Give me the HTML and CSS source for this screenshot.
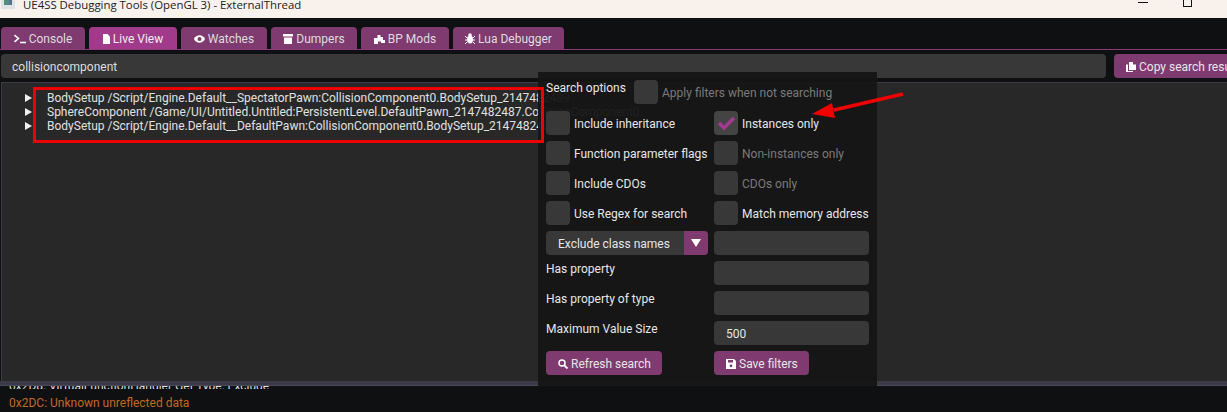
FILE: index.html
```html
<!DOCTYPE html>
<html lang="en">
<head>
<meta charset="utf-8">
<title>UE4SS Debugging Tools</title>
<link rel="stylesheet" href="styles.css">
</head>
<body>
<header class="titlebar">
  <svg class="app-icon" width="14" height="10" viewBox="0 0 14 10"><rect x="0" y="0" width="14" height="10" fill="#dfe3e6"/><rect x="3" y="0" width="5" height="6" fill="#4f8f7d"/><rect x="8" y="0" width="3" height="6" fill="#5a6f96"/></svg>
  <span class="title-text">UE4SS Debugging Tools (OpenGL 3) - ExternalThread</span>
  <span class="win-min"></span>
  <span class="win-max"></span>
</header>
<main class="app">
  <nav class="tabs">
    <div class="tab tab-w1"><svg class="ico" width="12" height="10" viewBox="0 0 12 10"><path d="M0.500 1l4 3.500-4 3.500" fill="none" stroke="#fff" stroke-width="1.600"/><path d="M6 8.500h6" stroke="#fff" stroke-width="1.600"/></svg>Console</div>
    <div class="tab tab-active tab-w2"><svg class="ico" width="7" height="10" viewBox="0 0 7 10"><path d="M0 0h4.500L7 2.500V10H0z" fill="#fff"/></svg>Live View</div>
    <div class="tab tab-w3"><svg class="ico" width="11" height="8" viewBox="0 0 11 8"><path d="M0 4c2-5 9-5 11 0-2 5-9 5-11 0z" fill="#fff"/><circle cx="5.500" cy="4" r="2" fill="#7f3a6f"/></svg>Watches</div>
    <div class="tab tab-w4"><svg class="ico" width="10" height="10" viewBox="0 0 10 10"><path d="M0 0h10v2.500H0zM1 3.500h8V10H1z" fill="#fff"/></svg>Dumpers</div>
    <div class="tab tab-w5"><svg class="ico" width="11" height="10" viewBox="0 0 11 10"><path d="M3.500 1h3v2H9v3h2v3H7V7.500H4V10H0V4h3.500z" fill="#fff"/></svg>BP Mods</div>
    <div class="tab tab-w6"><svg class="ico" width="10" height="11" viewBox="0 0 10 11"><ellipse cx="5" cy="6.500" rx="3" ry="4" fill="#fff"/><circle cx="5" cy="2" r="1.800" fill="#fff"/><path d="M0 3l2 2M10 3L8 5M0 7h2M10 7H8M0 11l2-2M10 11L8 9" stroke="#fff"/></svg>Lua Debugger</div>
  </nav>
  <section class="search-row">
    <div class="search-input">collisioncomponent</div>
    <div class="btn copy-btn"><svg class="ico" width="10" height="10" viewBox="0 0 10 10"><path d="M3 0h4v2.500h3V8H3zM0 2.500h2V9h5v1H0z" fill="#fff"/></svg>Copy search results</div>
  </section>
  <section class="tree">
    <div class="tree-row"><span class="arrow"></span>BodySetup /Script/Engine.Default__SpectatorPawn:CollisionComponent0.BodySetup_2147482489</div>
    <div class="tree-row"><span class="arrow"></span>SphereComponent /Game/UI/Untitled.Untitled:PersistentLevel.DefaultPawn_2147482487.CollisionComponent0</div>
    <div class="tree-row"><span class="arrow"></span>BodySetup /Script/Engine.Default__DefaultPawn:CollisionComponent0.BodySetup_2147482488</div>
  </section>
  <div class="divider"></div>
  <footer class="log">
    <div class="log-clipped">0x2D8: VirtualFunctionHandler Get Type: Exclude</div>
    <div class="log-line">0x2DC: Unknown unreflected data</div>
  </footer>
</main>

<aside class="popup">
  <div class="opt-top">
    <span class="opt-heading">Search options</span>
    <span class="check"></span>
    <span class="muted top-text">Apply filters when not searching</span>
  </div>
  <div class="opt-grid">
    <label class="opt"><span class="check"></span>Include inheritance</label>
    <label class="opt"><span class="check check-on"><svg width="24" height="24" viewBox="0 0 24 24"><path d="M5 12l5 5 10-10" fill="none" stroke="#a13a90" stroke-width="3.500"/></svg></span>Instances only</label>
    <label class="opt"><span class="check"></span>Function parameter flags</label>
    <label class="opt muted"><span class="check"></span>Non-instances only</label>
    <label class="opt"><span class="check"></span>Include CDOs</label>
    <label class="opt muted"><span class="check"></span>CDOs only</label>
    <label class="opt"><span class="check"></span>Use Regex for search</label>
    <label class="opt"><span class="check"></span>Match memory address</label>
    <div class="combo"><span class="combo-label">Exclude class names</span><span class="combo-btn"><svg width="12" height="10" viewBox="0 0 12 10"><path d="M1 1h10L6 9z" fill="#fff"/></svg></span></div>
    <div class="field"></div>
    <div class="prop-label">Has property</div>
    <div class="field"></div>
    <div class="prop-label">Has property of type</div>
    <div class="field"></div>
    <div class="prop-label">Maximum Value Size</div>
    <div class="field field-value">500</div>
    <div class="btn-cell"><div class="btn"><svg class="ico" width="10" height="10" viewBox="0 0 10 10"><circle cx="4" cy="4" r="3" fill="none" stroke="#fff" stroke-width="1.500"/><path d="M6 6l3.500 3.500" stroke="#fff" stroke-width="1.800"/></svg>Refresh search</div></div>
    <div class="btn-cell"><div class="btn"><svg class="ico" width="10" height="10" viewBox="0 0 10 10"><path d="M0 0h8l2 2v8H0z" fill="#fff"/><rect x="2" y="1" width="5" height="2.500" fill="#7f3a6f"/><circle cx="5" cy="6.800" r="1.400" fill="#7f3a6f"/></svg>Save filters</div></div>
  </div>
</aside>

<div class="annot-box"></div>
<svg class="annot-arrow" width="100" height="50" viewBox="0 0 100 50"><path d="M93 6L24 22" stroke="#f00000" stroke-width="3.500"/><polygon points="2,26 22,15 25,30" fill="#f00000"/></svg>
</body>
</html>
```
FILE: styles.css
```css
* { box-sizing: border-box; }
html, body { margin: 0; padding: 0; }
body {
  width: 1227px;
  height: 412px;
  overflow: hidden;
  position: relative;
  background: #0f1012;
  font-family: Roboto, "Liberation Sans", sans-serif;
  font-size: 12px;
  color: #e6e6e6;
}
.titlebar {
  height: 18px;
  background: #f8f1ec;
  display: flex;
  align-items: flex-start;
  overflow: hidden;
  color: #222;
}
.app-icon { margin: -1px 0 0 1px; }
.title-text {
  margin: -3px 0 0 8px;
  font-family: "Open Sans", sans-serif;
  font-size: 11.4px;
  line-height: 16px;
  flex: 1;
}
.win-min { width: 10px; height: 1px; background: #111; margin: 2px 0 0 0; }
.win-max { width: 9px; height: 7px; border: 1px solid #111; border-top: 0; border-radius: 0 0 1px 1px; margin: 0 35px 0 35px; }
.app { display: flex; flex-direction: column; height: 394px; }
.tabs {
  display: flex;
  gap: 4px;
  margin-top: 9px;
  padding-left: 1px;
  height: 23px;
  border-bottom: 1px solid #8a3a76;
}
.tab {
  height: 22px;
  background: #7f3a6f;
  border-radius: 4px 4px 0 0;
  display: flex;
  align-items: center;
  justify-content: center;
  padding-top: 1px;
  color: #ddd;
}
.tab-active { background: #a23a8b; color: #eee; }
.tab-w1 { width: 84px; }
.tab-w2 { width: 88px; }
.tab-w3 { width: 86px; }
.tab-w4 { width: 86px; }
.tab-w5 { width: 88px; }
.tab-w6 { width: 111px; }
.ico { margin-right: 3px; flex: none; }
.search-row {
  display: flex;
  gap: 8px;
  margin-top: 4px;
  padding-left: 1px;
  height: 24px;
}
.search-input {
  flex: none;
  width: 1105px;
  background: #383838;
  border-radius: 4px;
  padding-left: 11px;
  line-height: 26px;
  color: #ddd;
}
.btn {
  background: #7f3a6f;
  border-radius: 4px;
  height: 24px;
  display: inline-flex;
  align-items: center;
  padding: 2px 11px 0 12px;
  color: #e6e6e6;
  white-space: nowrap;
}
.copy-btn { flex: none; }
.tree {
  margin: 4px 0 0 1px;
  flex: 1;
  background: #282828;
  border-top: 1px solid #3c3c48;
  border-left: 1px solid #3c3c48;
  padding-top: 8px;
  overflow: hidden;
  white-space: nowrap;
}
.tree-row { height: 14px; line-height: 14px; padding-left: 23px; display: flex; align-items: center; color: #e0e0e0; }
.arrow {
  width: 0; height: 0;
  border-left: 7px solid #f0f0f0;
  border-top: 4px solid transparent;
  border-bottom: 4px solid transparent;
  margin-right: 15px;
}
.divider { height: 5px; background: #3a3a48; flex: none; border-bottom: 1px solid #4a4a58; }
.log { height: 26px; flex: none; overflow: hidden; }
.log-clipped { height: 3px; line-height: 0; padding-left: 9px; overflow: hidden; white-space: nowrap; color: #ddd; }
.log-line { margin-top: 6px; line-height: 16px; padding-left: 9px; color: #c4681f; }
.annot-box {
  position: absolute;
  left: 33px; top: 87px;
  width: 511px; height: 56px;
  border: 3px solid #ee0000;
}
.annot-arrow { position: absolute; left: 810px; top: 88px; }
.popup {
  position: absolute;
  left: 538px; top: 72px;
  width: 339px; height: 314px;
  background: rgba(21, 21, 22, 0.95);
  padding: 8px;
}
.opt-top { display: flex; height: 24px; align-items: flex-start; margin-bottom: 7px; }
.opt-heading { width: 88px; line-height: 16px; }
.opt-top .check { margin-right: 4px; }
.top-text { line-height: 26px; }
.muted { color: #7a7a7a; }
.check {
  width: 24px; height: 24px;
  background: #383838;
  border-radius: 4px;
  display: inline-block;
  flex: none;
}
.check-on { background: #444; }
.check svg { display: block; }
.opt-grid {
  display: grid;
  grid-template-columns: 162px 155px;
  column-gap: 6px;
  row-gap: 6px;
  grid-auto-rows: 24px;
}
.opt { display: flex; align-items: flex-start; gap: 4px; white-space: nowrap; line-height: 26px; }
.combo { display: flex; background: #383838; border-radius: 4px; overflow: hidden; }
.combo-label { flex: 1; padding-left: 12px; line-height: 26px; }
.combo-btn { width: 24px; background: #7f3a6f; display: flex; align-items: center; justify-content: center; }
.field { background: #383838; border-radius: 4px; }
.field-value { padding-left: 12px; line-height: 27px; }
.prop-label { line-height: 16px; }
.btn-cell { display: flex; }
```
